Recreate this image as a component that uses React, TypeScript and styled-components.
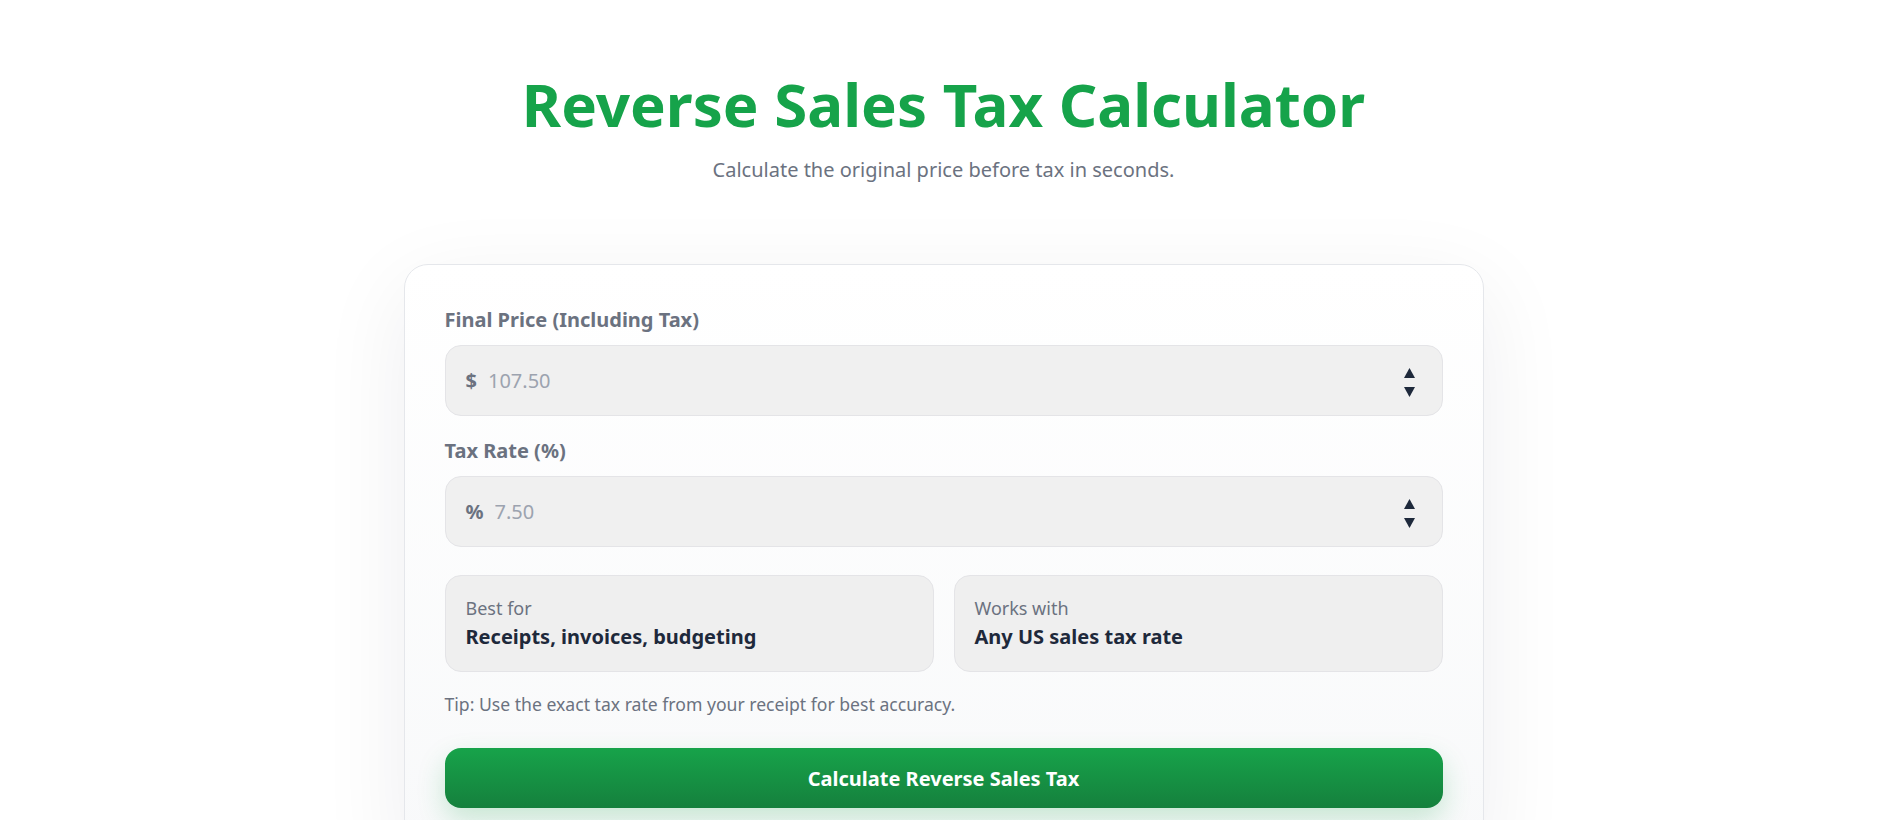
import React from "react";
import styled, { createGlobalStyle } from "styled-components";

const GlobalStyle = createGlobalStyle`
  html {
    scrollbar-width: none;
  }
  html::-webkit-scrollbar {
    display: none;
  }
  body {
    margin: 0;
    background: #ffffff;
    font-family: "Noto Sans", "Open Sans", Arial, sans-serif;
    color: #1e293b;
  }
  * {
    box-sizing: border-box;
  }
`;

const Page = styled.main`
  display: flex;
  flex-direction: column;
  align-items: center;
  padding: 68px 28px 0 24px;
`;

const Title = styled.h1`
  margin: 0;
  font-size: 60px;
  line-height: 72px;
  font-weight: 700;
  color: #16a34a;
  text-align: center;
`;

const Subtitle = styled.p`
  margin: 15px 0 0;
  font-size: 20px;
  line-height: 30px;
  color: #6b7280;
  text-align: center;
`;

const Card = styled.section`
  width: 100%;
  max-width: 1080px;
  margin-top: 79px;
  padding: 40px 40px 48px;
  border: 1px solid #e5e7eb;
  border-radius: 24px;
  background: linear-gradient(180deg, #ffffff 0%, #f8f9fa 100%);
  box-shadow: 0 24px 90px rgba(15, 23, 42, 0.07);
`;

const Field = styled.div`
  margin-bottom: 20px;
`;

const Label = styled.label`
  display: block;
  margin-bottom: 10px;
  font-size: 20px;
  line-height: 30px;
  font-weight: 700;
  color: #6b7280;
`;

const InputShell = styled.div`
  display: flex;
  align-items: center;
  height: 71px;
  padding: 0 27px 0 20px;
  border: 1px solid #e4e4e7;
  border-radius: 16px;
  background: #f0f0f0;
`;

const Prefix = styled.span`
  margin-right: 11px;
  font-size: 20px;
  font-weight: 700;
  color: #6b7280;
`;

const NumberInput = styled.input`
  flex: 1;
  min-width: 0;
  border: none;
  outline: none;
  background: transparent;
  padding: 0;
  font-family: inherit;
  font-size: 20px;
  color: #1e293b;

  &::placeholder {
    color: #9ca3af;
  }
`;

const Stepper = styled.div`
  display: flex;
  flex-direction: column;
  align-items: center;
  gap: 9px;
  margin-top: 3px;
`;

/* margin collapses with the last field's 20px, so this sets the whole gap */
const InfoGrid = styled.div`
  display: grid;
  grid-template-columns: 1fr 1fr;
  gap: 20px;
  margin-top: 28px;
`;

const InfoBox = styled.div`
  padding: 19px 20px;
  border: 1px solid #e4e4e7;
  border-radius: 16px;
  background: #efefef;
`;

const InfoLabel = styled.div`
  font-size: 18px;
  line-height: 27px;
  color: #6b7280;
`;

const InfoValue = styled.div`
  font-size: 20px;
  line-height: 30px;
  font-weight: 700;
  color: #1e293b;
`;

const Tip = styled.p`
  margin: 19px 0 0;
  font-size: 17.6px;
  line-height: 27px;
  color: #6b7280;
`;

const PrimaryButton = styled.button`
  display: block;
  width: 100%;
  height: 60px;
  margin-top: 30px;
  border: none;
  border-radius: 16px;
  background: linear-gradient(180deg, #17a34a 0%, #15803d 100%);
  box-shadow: 0 12px 28px rgba(22, 163, 74, 0.22);
  font-family: inherit;
  font-size: 20px;
  font-weight: 700;
  color: #ffffff;
  cursor: pointer;
`;

const Arrow = ({ up }: { up?: boolean }) => (
  <svg width="11" height="10" viewBox="0 0 11 10" aria-hidden="true">
    <path d={up ? "M5.5 0 L11 10 L0 10 Z" : "M0 0 L11 0 L5.5 10 Z"} fill="#1e293b" />
  </svg>
);

interface MoneyFieldProps {
  label: string;
  prefix: string;
  placeholder: string;
}

const MoneyField: React.FC<MoneyFieldProps> = ({ label, prefix, placeholder }) => (
  <Field>
    <Label>{label}</Label>
    <InputShell>
      <Prefix>{prefix}</Prefix>
      <NumberInput type="text" inputMode="decimal" placeholder={placeholder} />
      <Stepper>
        <Arrow up />
        <Arrow />
      </Stepper>
    </InputShell>
  </Field>
);

export default function App() {
  return (
    <>
      <GlobalStyle />
      <Page>
        <Title>Reverse Sales Tax Calculator</Title>
        <Subtitle>Calculate the original price before tax in seconds.</Subtitle>
        <Card>
          <MoneyField label="Final Price (Including Tax)" prefix="$" placeholder="107.50" />
          <MoneyField label="Tax Rate (%)" prefix="%" placeholder="7.50" />
          <InfoGrid>
            <InfoBox>
              <InfoLabel>Best for</InfoLabel>
              <InfoValue>Receipts, invoices, budgeting</InfoValue>
            </InfoBox>
            <InfoBox>
              <InfoLabel>Works with</InfoLabel>
              <InfoValue>Any US sales tax rate</InfoValue>
            </InfoBox>
          </InfoGrid>
          <Tip>Tip: Use the exact tax rate from your receipt for best accuracy.</Tip>
          <PrimaryButton type="button">Calculate Reverse Sales Tax</PrimaryButton>
        </Card>
      </Page>
    </>
  );
}
